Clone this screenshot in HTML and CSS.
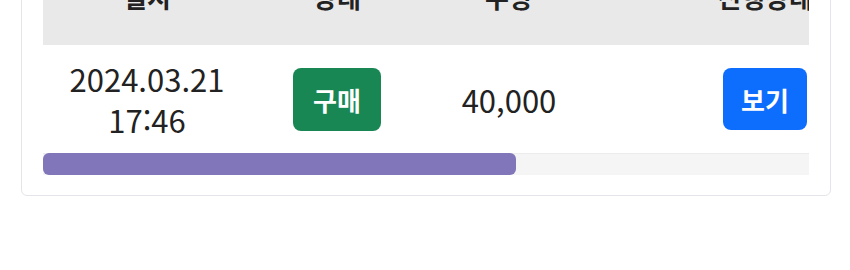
FILE: index.html
```html
<!DOCTYPE html>
<html lang="ko">

<head>
    <meta charset="UTF-8">
    <meta name="viewport" content="width=device-width, initial-scale=1.0">
    <title>거래 내역</title>
    <link rel="stylesheet" href="styles.css">
</head>

<body>

    <div class="page">
        <!-- 거래 내역 카드 -->
        <div class="history-card">
            <div class="table-scroll">
                <table class="history-table">
                    <colgroup>
                        <col class="col-date">
                        <col class="col-state">
                        <col class="col-qty">
                        <col class="col-view">
                        <col class="col-etc">
                    </colgroup>
                    <thead>
                        <tr>
                            <th>일시</th>
                            <th>상태</th>
                            <th>수량</th>
                            <th>진행상태</th>
                            <th>비고</th>
                        </tr>
                    </thead>
                    <tbody>
                        <tr>
                            <td>2024.03.21<br>17:46</td>
                            <td><span class="badge badge-buy">구매</span></td>
                            <td>40,000</td>
                            <td><a href="#" class="btn-view">보기</a></td>
                            <td></td>
                        </tr>
                    </tbody>
                </table>
            </div>

            <!-- Barre de défilement -->
            <div class="scroll-track">
                <div class="scroll-thumb" style="width: 473px;"></div>
            </div>
        </div>
    </div>

</body>

</html>
```

FILE: styles.css
```css
/* Style global */
body, html {
    margin: 0;
    padding: 0;
    background: #fff;
    font-family: "Noto Sans CJK KR", "Noto Sans", sans-serif;
    overflow: hidden;
}

.page {
    padding: 0 19px 0 21px;
}

/* Carte */
.history-card {
    margin-top: -73px;
    background: #fff;
    border: 1px solid #e4e4ea;
    border-radius: 6px;
    padding: 21px 21px 20px;
}

/* Zone du tableau */
.table-scroll {
    overflow: hidden;
}

.history-table {
    width: 1240px;
    table-layout: fixed;
    border-collapse: collapse;
    text-align: center;
    color: #222;
}

.col-date { width: 208px; }
.col-state { width: 172px; }
.col-qty { width: 172px; }
.col-view { width: 340px; }

.history-table th {
    background: #e9e9e9;
    font-size: 26px;
    font-weight: bold;
    line-height: 36px;
    padding: 30px 10px;
}

.history-table td {
    font-size: 31px;
    font-weight: 400;
    line-height: 41px;
    padding: 13px 10px 13px;
    vertical-align: middle;
    background: #fff;
}

/* Boutons */
.badge,
.btn-view {
    display: inline-block;
    font-size: 26px;
    font-weight: bold;
    line-height: 35px;
    color: #fff;
    text-decoration: none;
    border-radius: 8px;
    vertical-align: middle;
}

.badge-buy {
    background: #198754;
    padding: 14px 20px;
}

.btn-view {
    background: #0d6efd;
    padding: 14px 18px 13px;
}

/* Barre de défilement */
.scroll-track {
    height: 22px;
    background: #f5f5f5;
    box-shadow: inset 0 1px 0 #ececec;
}

.scroll-thumb {
    height: 100%;
    background: #8076b9;
    border-radius: 6px;
}
```
